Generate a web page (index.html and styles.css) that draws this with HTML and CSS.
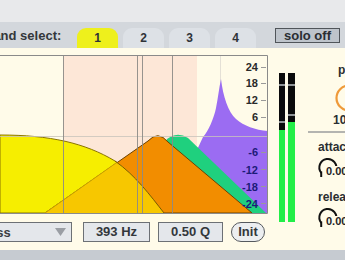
FILE: index.html
```html
<!DOCTYPE html>
<html>
<head>
<meta charset="utf-8">
<link rel="stylesheet" href="styles.css">
</head>
<body>
<div class="device">
  <div class="topband"></div>
  <div class="tabbar">
    <span class="band-label">Band select:</span>
    <div class="tabs">
      <div class="tab active">1</div>
      <div class="tab">2</div>
      <div class="tab">3</div>
      <div class="tab">4</div>
    </div>
    <div class="solo">solo off</div>
  </div>
  <div class="main">
    <div class="graph-col">
      <svg class="graph" width="268" height="159" viewBox="0 55 268 159">
        <rect x="0" y="55" width="268" height="159" fill="#fffbe9"/>
        <rect x="63" y="56" width="134" height="157" fill="#fde7d7"/>
        <line x1="220.5" y1="56" x2="220.5" y2="213" stroke="#e4e0d6" stroke-width="1"/>
        <path d="M0,213 L0,135 C50,135 85,143 115,161 C135,175 150,195 164,213 Z" fill="#f6ee00" stroke="#8a7400" stroke-width="1"/>
        <path d="M190,165 L203,137 C208,132 214,118 216,108 C218,98 219,88 221,79 C223,96 228,112 236,119 C244,126 255,130 268,131 L268,213 L240,213 Z" fill="#9b6cf2"/>
        <path d="M165,141 Q176,130 188,138 L266,213 L252,213 Z" fill="#1fd07e"/>
        <path d="M45,213 L148,141 Q158,130 168,142 L252,213 Z" fill="#f28d00" stroke="#6e4200" stroke-width="1"/>
        <path d="M45,213 L117,162.3 C135,175 150,195 164,213 Z" fill="#f7c700"/>
        <path d="M45,213 L117,162.3" stroke="#caa200" stroke-width="1" fill="none"/>
        <path d="M115,161 C135,175 150,195 164,213" stroke="#7a5a00" stroke-width="1" fill="none"/>
        <line x1="0" y1="136.5" x2="268" y2="136.5" stroke="#c8c4bc" stroke-opacity="0.8" stroke-width="1"/>
        <g stroke="#8c8a86" stroke-width="1" stroke-opacity="0.9">
          <line x1="63.5" y1="56" x2="63.5" y2="213"/>
          <line x1="137.5" y1="56" x2="137.5" y2="213"/>
          <line x1="142.5" y1="56" x2="142.5" y2="213"/>
          <line x1="172.5" y1="56" x2="172.5" y2="213"/>
        </g>
        <g class="ylab">
          <text x="258" y="71">24</text>
          <text x="258" y="87">18</text>
          <text x="258" y="104">12</text>
          <text x="258" y="121">6</text>
          <text x="258" y="156" class="neg">-6</text>
          <text x="258" y="174" class="neg">-12</text>
          <text x="258" y="191" class="neg">-18</text>
          <text x="258" y="208" class="neg">-24</text>
        </g>
        <g stroke="#999" stroke-width="1">
          <line x1="261" y1="67.5" x2="266" y2="67.5"/>
          <line x1="261" y1="83.5" x2="266" y2="83.5"/>
          <line x1="261" y1="100.5" x2="266" y2="100.5"/>
          <line x1="261" y1="117.5" x2="266" y2="117.5"/>
          <line x1="261" y1="152.5" x2="266" y2="152.5"/>
          <line x1="261" y1="169.5" x2="266" y2="169.5"/>
          <line x1="261" y1="186.5" x2="266" y2="186.5"/>
          <line x1="261" y1="203.5" x2="266" y2="203.5"/>
        </g>
        <path d="M0,55.5 H267.5 V213.5 H0" fill="none" stroke="#8a8a8a" stroke-width="1"/>
      </svg>
      <div class="controls">
        <div class="select"><span>Lowpass</span><svg class="caret" width="11" height="8" viewBox="0 0 11 8"><path d="M0,0 H11 L5.5,8 Z" fill="#9a9ea4"/></svg></div>
        <div class="field hz">393 Hz</div>
        <div class="field q">0.50 Q</div>
        <div class="init">Init</div>
      </div>
    </div>
    <div class="meters">
      <div class="meter">
        <div class="seg s1"></div>
        <div class="mark"></div>
        <div class="seg s2a"></div>
        <div class="mark"></div>
        <div class="seg s3a"></div>
        <div class="level"></div>
      </div>
      <div class="meter">
        <div class="seg s1"></div>
        <div class="mark"></div>
        <div class="seg s2b"></div>
        <div class="mark"></div>
        <div class="seg s3b"></div>
        <div class="level"></div>
      </div>
    </div>
    <div class="side">
      <div class="lbl peak-lbl">peak</div>
      <svg class="ring" width="30" height="30" viewBox="0 0 30 30"><circle cx="15" cy="15" r="12.5" fill="none" stroke="#ef9a3a" stroke-width="2.2"/></svg>
      <div class="peak-val">10.0</div>
      <div class="sep"></div>
      <div class="lbl k-lbl">attack</div>
      <div class="knob">
        <svg width="22" height="22" viewBox="0 0 22 22"><path d="M4.2,16.8 A8.5,8.5 0 1 1 18.8,14.5" fill="none" stroke="#111" stroke-width="2"/><path d="M4.2,15.5 L4.2,21" stroke="#111" stroke-width="2"/></svg>
        <span class="kval">0.00</span>
      </div>
      <div class="lbl k-lbl rel">release</div>
      <div class="knob">
        <svg width="22" height="22" viewBox="0 0 22 22"><path d="M4.2,16.8 A8.5,8.5 0 1 1 18.8,14.5" fill="none" stroke="#111" stroke-width="2"/><path d="M4.2,15.5 L4.2,21" stroke="#111" stroke-width="2"/></svg>
        <span class="kval">0.00</span>
      </div>
    </div>
  </div>
  <div class="bottomband"></div>
</div>
</body>
</html>
```
FILE: styles.css
```css
html, body {
  margin: 0;
  padding: 0;
}
body {
  width: 345px;
  height: 260px;
  overflow: hidden;
  background: #fffbe9;
  font-family: "Liberation Sans", Arial, sans-serif;
  font-weight: bold;
  color: #2e3236;
}
.device {
  width: 345px;
  height: 260px;
  display: flex;
  flex-direction: column;
  overflow: hidden;
}
.topband {
  height: 22px;
  background: #e8e9eb;
  flex: none;
}
.tabbar {
  height: 26px;
  flex: none;
  background: #d3d7dc;
  display: flex;
  align-items: flex-end;
}
.band-label {
  margin-left: -16px;
  width: 93px;
  flex: none;
  font-size: 13px;
  line-height: 20px;
  color: #33373b;
  align-self: center;
  margin-top: 2px;
}
.tabs {
  display: flex;
  gap: 5px;
}
.tab {
  width: 41px;
  height: 20px;
  border-radius: 9px 9px 0 0;
  background: #dde1e6;
  font-size: 12px;
  line-height: 21px;
  text-align: center;
  color: #2f3338;
}
.tab.active {
  background: #eef01c;
}
.solo {
  margin-left: 19px;
  align-self: flex-start;
  margin-top: 6px;
  width: 63px;
  height: 13px;
  border: 1px solid #50555a;
  background: #bec4cb;
  font-size: 13px;
  line-height: 13px;
  text-align: center;
  color: #2a2e32;
}
.main {
  height: 202px;
  flex: none;
  display: flex;
}
.graph-col {
  width: 268px;
  flex: none;
  padding-top: 7px;
}
.graph {
  display: block;
}
.ylab text {
  font-family: "Liberation Sans", Arial, sans-serif;
  font-weight: bold;
  font-size: 11px;
  text-anchor: end;
  fill: #2a2a2a;
}
.ylab text.neg {
  fill: #1c1a78;
}
.controls {
  display: flex;
  margin-top: 8px;
  height: 20px;
}
.select {
  margin-left: -50px;
  width: 111px;
  height: 18px;
  border: 1px solid #6c7075;
  background: #e4e7eb;
  display: flex;
  align-items: center;
  justify-content: space-between;
  padding: 0 5px 0 4px;
  box-sizing: content-box;
  font-size: 13px;
  color: #3a3e42;
}
.field {
  margin-left: 11px;
  width: 65px;
  height: 18px;
  border: 1px solid #6c7075;
  background: #e4e7eb;
  font-size: 13px;
  line-height: 18px;
  text-align: center;
  color: #33373b;
}
.field.q {
  margin-left: 8px;
  width: 63px;
}
.init {
  margin-left: 8px;
  width: 32px;
  height: 18px;
  border: 1px solid #55595e;
  border-radius: 10px;
  background: #eceef0;
  font-size: 13px;
  line-height: 18px;
  text-align: center;
  color: #33373b;
}
.meters {
  margin-left: 11px;
  padding-top: 25px;
  display: flex;
  gap: 3px;
  flex: none;
}
.meter {
  width: 6px;
  height: 149px;
  background: #0a0a0c;
  display: flex;
  flex-direction: column;
}
.meter + .meter {
  width: 7px;
}
.mark {
  height: 2px;
  background: #8e9296;
  flex: none;
}
.seg.s1 { height: 11px; }
.seg.s2a { height: 35px; }
.seg.s3a { height: 7px; }
.seg.s2b { height: 28px; }
.seg.s3b { height: 6px; }
.level {
  flex: 1;
  background: #22ee48;
}
.side {
  margin-left: 13px;
  width: 60px;
  flex: none;
  display: flex;
  flex-direction: column;
}
.lbl {
  font-size: 12px;
  line-height: 12px;
  color: #2a2e32;
}
.peak-lbl {
  margin-top: 16px;
  padding-left: 30px;
}
.ring {
  display: block;
  margin-top: 7px;
  margin-left: 26px;
}
.peak-val {
  font-size: 12px;
  line-height: 12px;
  padding-left: 25px;
  margin-top: 1px;
  color: #2a2e32;
}
.sep {
  margin-top: 5px;
  height: 2px;
  background: #b4b4b0;
}
.k-lbl {
  margin-top: 8px;
  padding-left: 10px;
}
.k-lbl.rel {
  margin-top: 13px;
}
.knob {
  position: relative;
  height: 22px;
  margin-top: 3px;
  margin-left: 9px;
}
.knob svg {
  display: block;
}
.kval {
  position: absolute;
  left: 8px;
  top: 10px;
  font-size: 11px;
  line-height: 11px;
  color: #1e2226;
  background: #fffbe9;
  padding-left: 1px;
}
.bottomband {
  flex: 1;
  background: #c6cbd1;
}
```
